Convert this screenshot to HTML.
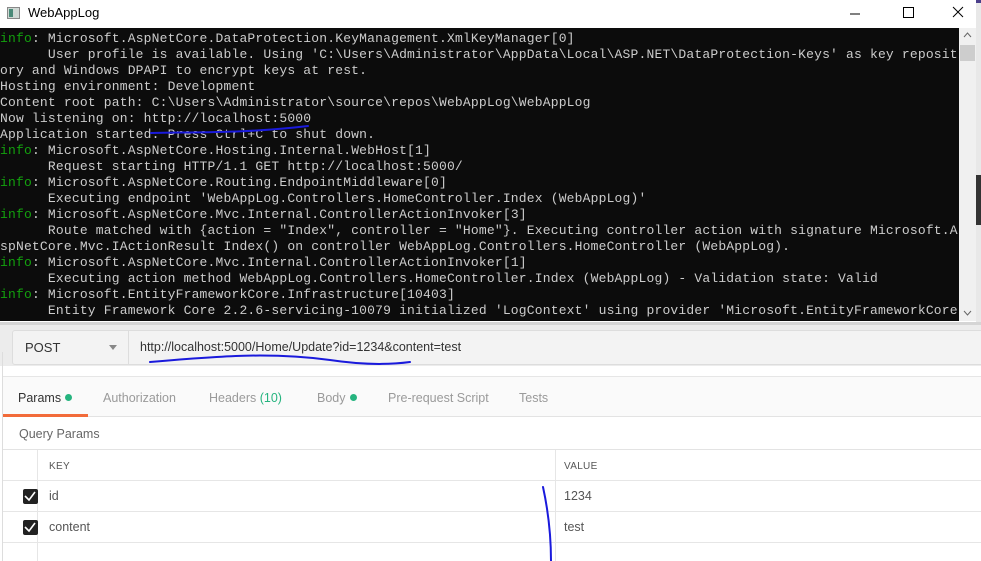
<!DOCTYPE html>
<html><head><meta charset="utf-8"><style>
*{margin:0;padding:0;box-sizing:border-box}
html,body{width:981px;height:561px;overflow:hidden}
body{background:#fff;position:relative;font-family:"Liberation Sans",sans-serif}
.title{position:absolute;left:0;top:0;width:976px;height:28px;background:#fff}
.title .t{position:absolute;left:28px;top:5px;font-size:13px;color:#000}
.ico{position:absolute;left:7px;top:7px;width:13px;height:12px;border:1px solid #888;background:#cfd8d4}
.ico:after{content:"";position:absolute;left:1px;top:1px;width:4px;height:8px;background:#4a8a78}
.con{position:absolute;left:0;top:28px;width:959px;height:293px;background:#0c0c0c;overflow:hidden}
.con pre{font-family:"Liberation Mono",monospace;font-size:13px;line-height:16px;color:#cccccc;padding-top:3px;letter-spacing:0.18px;white-space:pre}
.g{color:#13a10e}
.sb{position:absolute;left:959px;top:28px;width:17px;height:293px;background:#f0f0f0}
.sb .th{position:absolute;left:1px;top:17px;width:15px;height:16px;background:#cdcdcd}
.rstrip{position:absolute;left:976px;top:0;width:5px;height:330px;background:#e8e8e8}
.pm{position:absolute;left:0;top:322px;width:981px;height:239px;background:#fff;overflow:hidden}
.bar{position:absolute;left:0;top:0;width:981px;height:44px;background:#ececec;border-top:3px solid #d5d5d5}
.url{position:absolute;left:12px;top:5px;width:975px;height:35px;background:#f3f3f3;border:1px solid #ddd;border-radius:3px}
.meth{position:absolute;left:12px;top:9px;font-size:13px;color:#333}
.arr{position:absolute;left:96px;top:14px;width:0;height:0;border-left:4px solid transparent;border-right:4px solid transparent;border-top:5px solid #888}
.div{position:absolute;left:115px;top:0;width:1px;height:33px;background:#ddd}
.ut{position:absolute;left:127px;top:9px;font-size:12.5px;color:#333}
.tabs{position:absolute;left:3px;top:54px;width:978px;height:41px;background:#fafafa;border-top:1px solid #e6e6e6;border-bottom:1px solid #e3e3e3}
.tab{position:absolute;top:14px;font-size:12.5px;color:#9a9a9a}
.dot{display:inline-block;width:7px;height:7px;border-radius:50%;background:#26b47f;margin-left:4px;vertical-align:1px}
.ul{position:absolute;left:0;top:37px;width:85px;height:3px;background:#f26b3a}
.qp{position:absolute;left:19px;top:105px;font-size:12.5px;color:#666}
.tbl{position:absolute;left:3px;top:127px;width:978px}
.row{position:relative;height:31px;border-bottom:1px solid #e6e6e6}
.row.h{height:32px;border-top:1px solid #e3e3e3}
.c1{position:absolute;left:0;top:0;width:35px;height:100%;border-right:1px solid #e6e6e6}
.c3{position:absolute;left:552px;top:0;height:100%;border-left:1px solid #e6e6e6}
.txt{position:absolute;top:8px;font-size:12.5px;color:#555}
.hd{position:absolute;top:11px;font-size:10px;color:#555;letter-spacing:.3px}
.cb{position:absolute;left:20px;top:8px;width:15px;height:15px;background:#222;border-radius:2px}
.lb{position:absolute;left:2px;top:30px;width:1px;height:290px;background:#ddd}
</style></head><body>
<div class="title"><div class="ico"></div><div class="t">WebAppLog</div>
<svg style="position:absolute;left:850px;top:6px" width="120" height="16"><line x1="0" y1="8" x2="10" y2="8" stroke="#000" stroke-width="1"/><rect x="53.5" y="1.5" width="10" height="10" fill="none" stroke="#000"/><path d="M103 1 L113 11 M113 1 L103 11" stroke="#000"/></svg></div>
<div class="con"><pre><span class="g">info</span>: Microsoft.AspNetCore.DataProtection.KeyManagement.XmlKeyManager[0]
      User profile is available. Using 'C:\Users\Administrator\AppData\Local\ASP.NET\DataProtection-Keys' as key reposit
ory and Windows DPAPI to encrypt keys at rest.
Hosting environment: Development
Content root path: C:\Users\Administrator\source\repos\WebAppLog\WebAppLog
Now listening on: http://localhost:5000
Application started. Press Ctrl+C to shut down.
<span class="g">info</span>: Microsoft.AspNetCore.Hosting.Internal.WebHost[1]
      Request starting HTTP/1.1 GET http://localhost:5000/
<span class="g">info</span>: Microsoft.AspNetCore.Routing.EndpointMiddleware[0]
      Executing endpoint 'WebAppLog.Controllers.HomeController.Index (WebAppLog)'
<span class="g">info</span>: Microsoft.AspNetCore.Mvc.Internal.ControllerActionInvoker[3]
      Route matched with {action = "Index", controller = "Home"}. Executing controller action with signature Microsoft.A
spNetCore.Mvc.IActionResult Index() on controller WebAppLog.Controllers.HomeController (WebAppLog).
<span class="g">info</span>: Microsoft.AspNetCore.Mvc.Internal.ControllerActionInvoker[1]
      Executing action method WebAppLog.Controllers.HomeController.Index (WebAppLog) - Validation state: Valid
<span class="g">info</span>: Microsoft.EntityFrameworkCore.Infrastructure[10403]
      Entity Framework Core 2.2.6-servicing-10079 initialized 'LogContext' using provider 'Microsoft.EntityFrameworkCore</pre></div>
<div class="sb"><div class="th"></div>
<svg style="position:absolute;left:4px;top:4px" width="9" height="6"><path d="M1 5 L4.5 1 L8 5" fill="none" stroke="#666"/></svg>
<svg style="position:absolute;left:4px;top:282px" width="9" height="6"><path d="M1 1 L4.5 5 L8 1" fill="none" stroke="#666"/></svg></div>
<div class="rstrip"><div style="position:absolute;top:0;height:3px;width:5px;background:#4a3e8a"></div><div style="position:absolute;top:175px;height:50px;width:5px;background:#333"></div></div>
<div class="pm">
<div class="bar"><div class="url"><div class="meth">POST</div><div class="arr"></div><div class="div"></div><div class="ut">http://localhost:5000/Home/Update?id=1234&amp;content=test</div></div></div>
<div class="lb"></div>
<div class="tabs">
<div class="tab" style="left:15px;color:#333">Params<span class="dot"></span></div>
<div class="tab" style="left:100px">Authorization</div>
<div class="tab" style="left:206px">Headers <span style="color:#26b47f">(10)</span></div>
<div class="tab" style="left:314px">Body<span class="dot"></span></div>
<div class="tab" style="left:385px">Pre-request Script</div>
<div class="tab" style="left:516px">Tests</div>
<div class="ul"></div></div>
<div class="qp">Query Params</div>
<div class="tbl">
<div class="row h"><div class="c1"></div><div class="hd" style="left:46px">KEY</div><div class="c3"><div class="hd" style="left:8px">VALUE</div></div></div>
<div class="row"><div class="c1"><div class="cb"></div></div><div class="txt" style="left:46px">id</div><div class="c3"><div class="txt" style="left:8px">1234</div></div></div>
<div class="row"><div class="c1"><div class="cb"></div></div><div class="txt" style="left:46px">content</div><div class="c3"><div class="txt" style="left:8px">test</div></div></div>
<div class="row"><div class="c1"></div><div class="c3"></div></div>
</div>
</div>
<svg style="position:absolute;left:0;top:0" width="981" height="561">
<g fill="none" stroke="#1a1adc" stroke-width="2" stroke-linecap="round">
<path d="M151 133 C200 132 250 133 308 126"/>
<path d="M150 362 C220 356 270 352 330 360 C370 366 395 364 410 362"/>
<path d="M543 487 C548 510 551 535 551 561"/>
</g>
<g stroke="#fff" stroke-width="1.6" fill="none"><path d="M25 496 L29 500 L35 492"/><path d="M25 527 L29 531 L35 523"/></g>
</svg>
</body></html>
